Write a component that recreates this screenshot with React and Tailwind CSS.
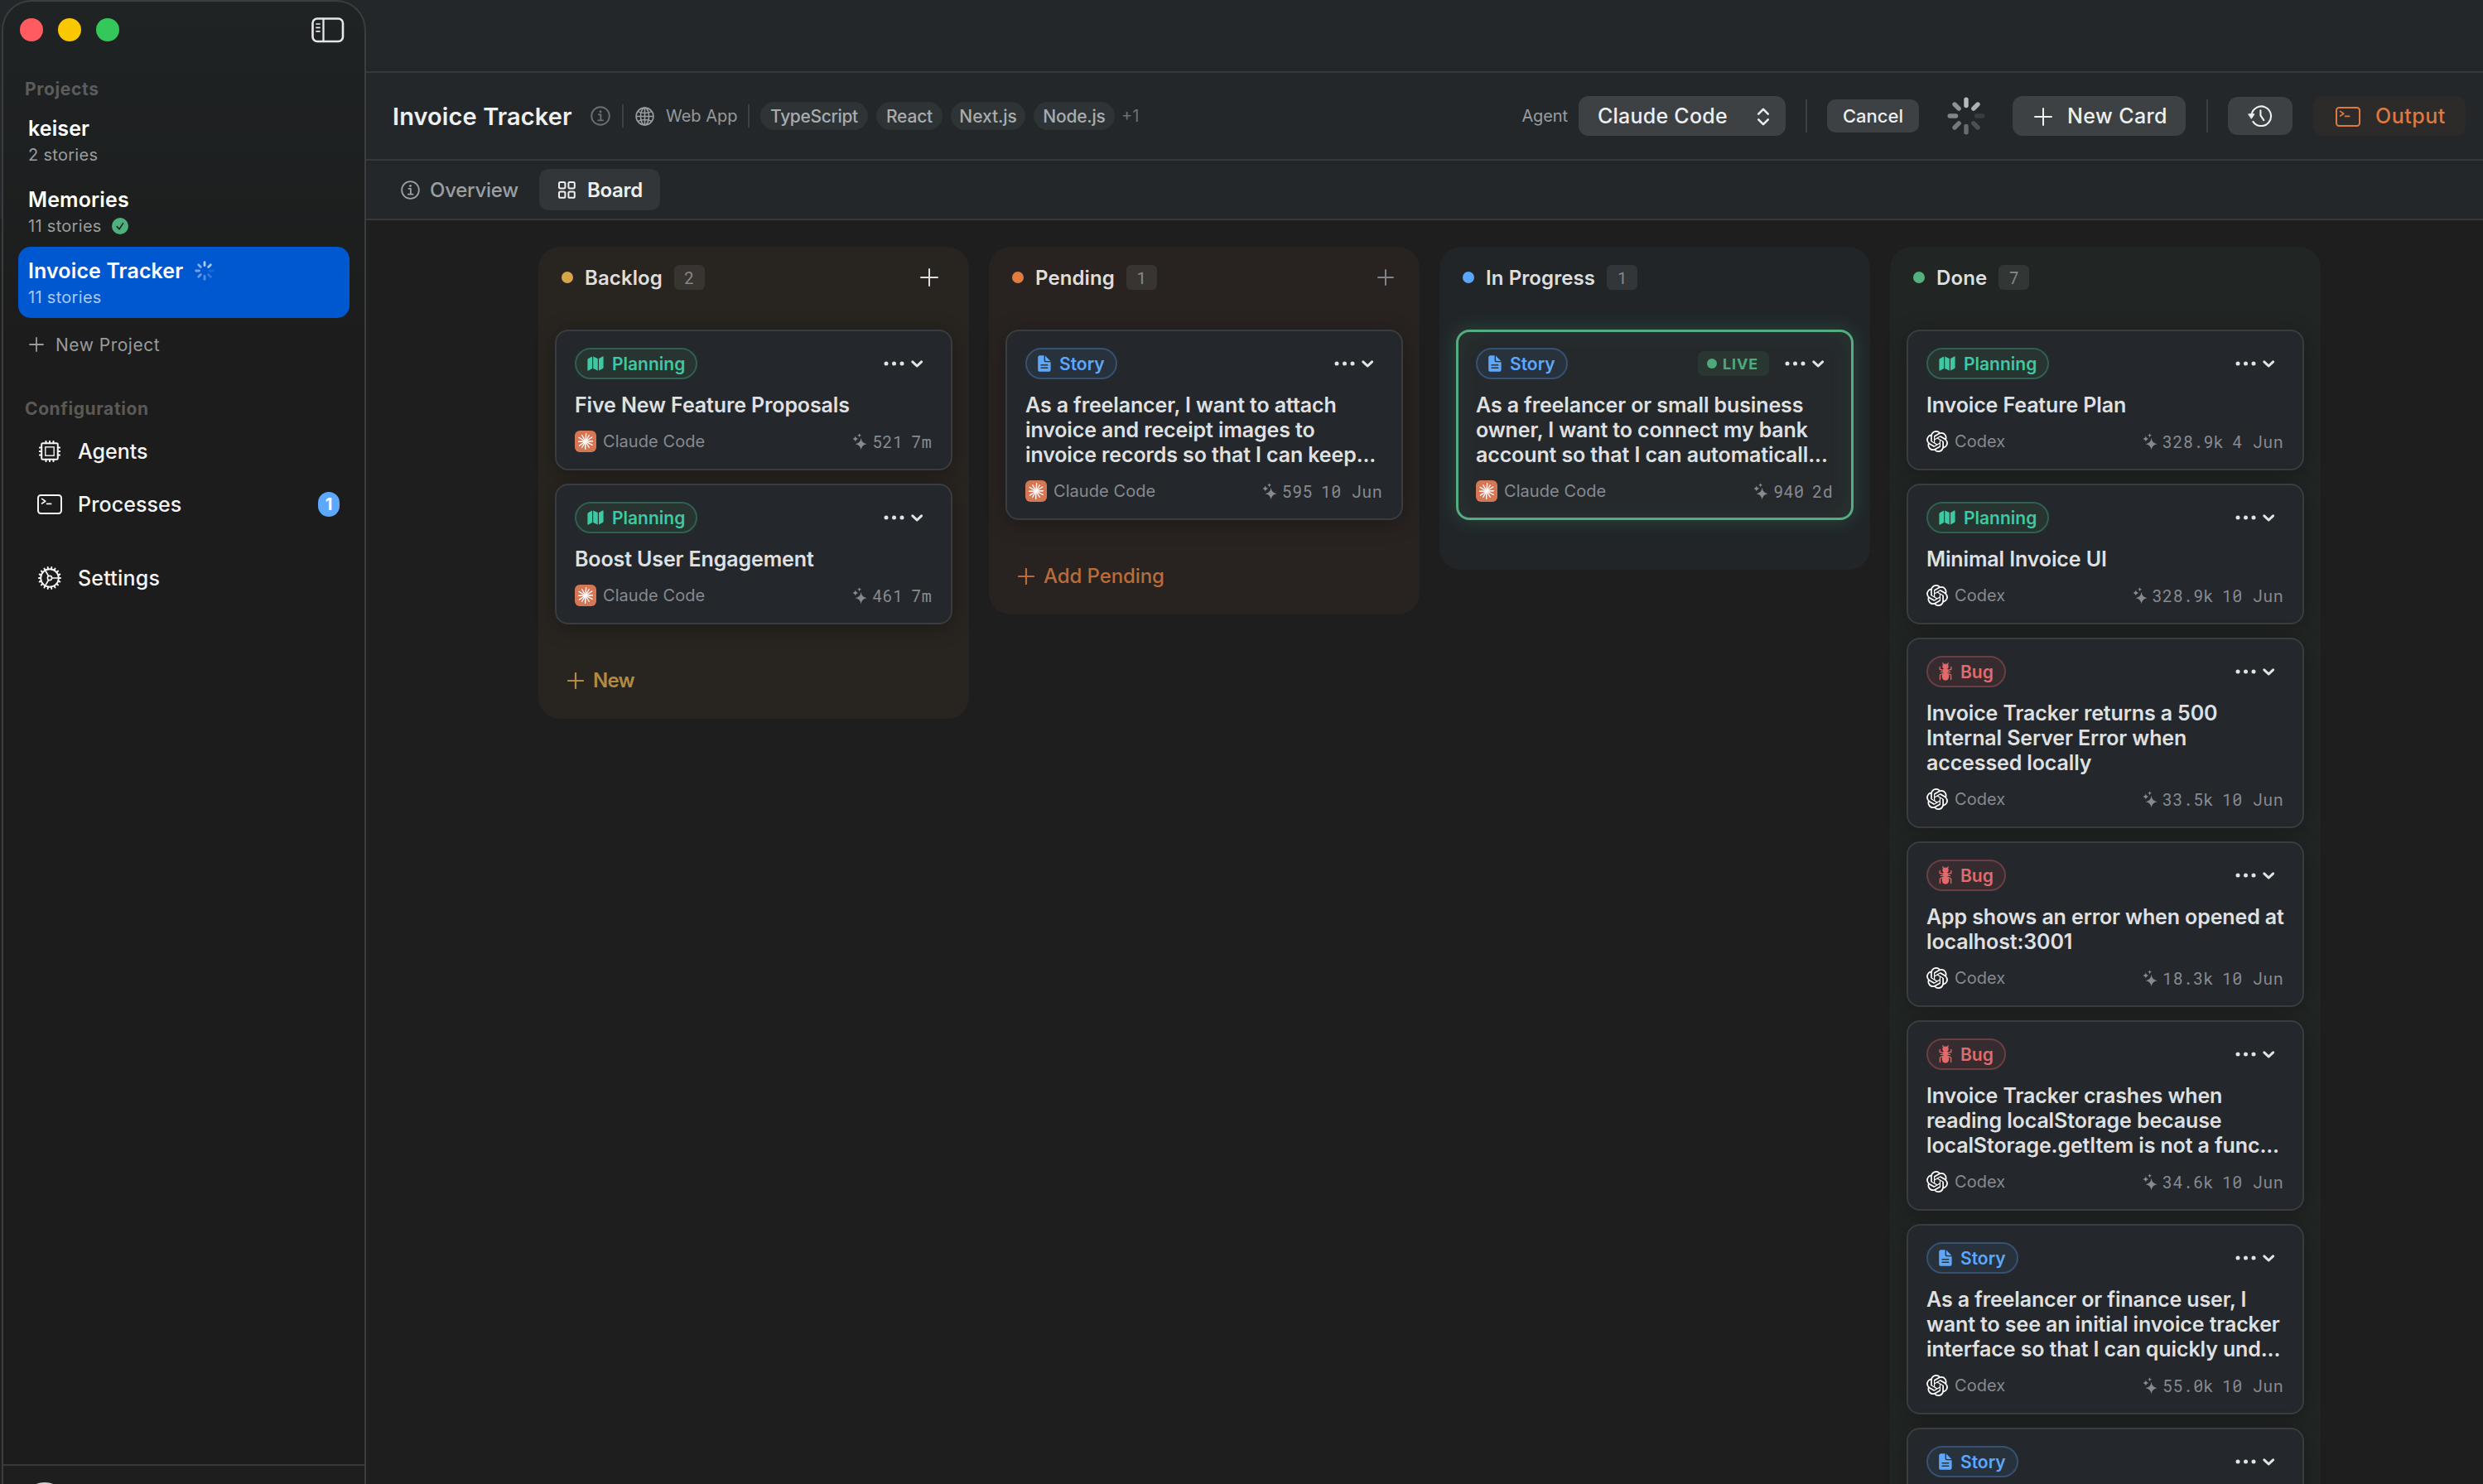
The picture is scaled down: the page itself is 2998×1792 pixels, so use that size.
import React from 'react';
import { SiOpenai } from 'react-icons/si';

const projects = [
    { name: 'keiser', stories: '2 stories' },
    { name: 'Memories', stories: '11 stories', done: true },
    { name: 'Invoice Tracker', stories: '11 stories', active: true }
];

const columns = [
    {
        title: 'Backlog',
        count: 2,
        bg: 'bg-[#282420]',
        dot: 'bg-[#d6a54a]',
        plus: 'mr-[37px] text-[#dedede]',
        plusSize: 22,
        action: 'New',
        actionClass: 'text-[#b08b42] font-semibold tracking-[-0.8px]',
        cards: [
            { type: 'planning', title: ['Five New Feature Proposals'], agent: 'claude', tokens: '521', date: '7m' },
            { type: 'planning', title: ['Boost User Engagement'], agent: 'claude', tokens: '461', date: '7m' }
        ]
    },
    {
        title: 'Pending',
        count: 1,
        bg: 'bg-[#282320]',
        dot: 'bg-[#e27d41]',
        plus: 'mr-[30px] text-[#7f848b]',
        plusSize: 20,
        action: 'Add Pending',
        actionClass: 'text-[#bb6b39] font-medium tracking-[-0.1px]',
        cards: [
            {
                type: 'story',
                title: ['As a freelancer, I want to attach', 'invoice and receipt images to', 'invoice records so that I can keep...'],
                agent: 'claude',
                tokens: '595',
                date: '10 Jun'
            }
        ]
    },
    {
        title: 'In Progress',
        count: 1,
        bg: 'bg-[#212528]',
        dot: 'bg-[#5ba6fb]',
        cards: [
            {
                type: 'story',
                live: true,
                title: ['As a freelancer or small business', 'owner, I want to connect my bank', 'account so that I can automaticall...'],
                agent: 'claude',
                tokens: '940',
                date: '2d'
            }
        ]
    },
    {
        title: 'Done',
        count: 7,
        bg: 'bg-[#212523]',
        dot: 'bg-[#54b07f]',
        cards: [
            { type: 'planning', title: ['Invoice Feature Plan'], agent: 'codex', tokens: '328.9k', date: '4 Jun' },
            { type: 'planning', title: ['Minimal Invoice UI'], agent: 'codex', tokens: '328.9k', date: '10 Jun' },
            {
                type: 'bug',
                title: ['Invoice Tracker returns a 500', 'Internal Server Error when', 'accessed locally'],
                agent: 'codex',
                tokens: '33.5k',
                date: '10 Jun'
            },
            { type: 'bug', title: ['App shows an error when opened at', 'localhost:3001'], agent: 'codex', tokens: '18.3k', date: '10 Jun' },
            {
                type: 'bug',
                title: ['Invoice Tracker crashes when', 'reading localStorage because', 'localStorage.getItem is not a func...'],
                agent: 'codex',
                tokens: '34.6k',
                date: '10 Jun'
            },
            {
                type: 'story',
                title: ['As a freelancer or finance user, I', 'want to see an initial invoice tracker', 'interface so that I can quickly und...'],
                agent: 'codex',
                tokens: '55.0k',
                date: '10 Jun'
            },
            { type: 'story' }
        ]
    }
];

const PlusIcon = ({ size = 20, stroke = 2 }) => (
    <svg width={size} height={size} viewBox={`0 0 ${size} ${size}`} fill="none" stroke="currentColor" strokeWidth={stroke} strokeLinecap="round">
        <path d={`M${size / 2} 1V${size - 1}M1 ${size / 2}H${size - 1}`} />
    </svg>
);

const InfoIcon = ({ size }) => (
    <svg width={size} height={size} viewBox="0 0 24 24" fill="none" stroke="currentColor" strokeWidth="1.9">
        <circle cx="12" cy="12" r="10.8" />
        <path d="M9.8 10.3h2.6v7M9.2 17.4h6" strokeLinecap="round" strokeLinejoin="round" />
        <circle cx="12" cy="6.8" r="1.5" fill="currentColor" stroke="none" />
    </svg>
);

const GlobeIcon = () => (
    <svg width="23" height="23" viewBox="0 0 23 23" fill="none" stroke="currentColor" strokeWidth="1.6">
        <circle cx="11.5" cy="11.5" r="10.4" />
        <ellipse cx="11.5" cy="11.5" rx="5" ry="10.4" />
        <path d="M11.5 1v21M1 11.5h21M3.2 5.6c4.8 2.6 11.8 2.6 16.6 0M3.2 17.4c4.8-2.6 11.8-2.6 16.6 0" />
    </svg>
);

const GridIcon = () => (
    <svg width="21" height="21" viewBox="0 0 21 21" fill="none" stroke="currentColor" strokeWidth="2">
        <rect x="1" y="1" width="7.4" height="7.4" rx="1.6" />
        <rect x="12.4" y="1" width="7.4" height="7.4" rx="1.6" />
        <rect x="1" y="12.4" width="7.4" height="7.4" rx="1.6" />
        <rect x="12.4" y="12.4" width="7.4" height="7.4" rx="1.6" />
    </svg>
);

const SidebarIcon = () => (
    <svg width="40" height="31" viewBox="0 0 40 31" fill="none" stroke="currentColor" strokeLinecap="round">
        <rect x="1.5" y="1.5" width="36.5" height="27.5" rx="5.5" strokeWidth="2.6" />
        <path d="M14.5 2v27" strokeWidth="2.3" />
        <path d="M6 8h4M6 12.4h4M6 16.8h4" strokeWidth="1.7" />
    </svg>
);

const TerminalIcon = () => (
    <svg width="30" height="24" viewBox="0 0 30 24" fill="none" stroke="currentColor" strokeWidth="2" strokeLinecap="round" strokeLinejoin="round">
        <rect x="1" y="1" width="28" height="22" rx="3.2" />
        <path d="M5.6 5.4l4.2 2.8-4.2 2.8M11.6 11.4h5" strokeWidth="1.7" />
    </svg>
);

const ChipIcon = () => (
    <svg width="26" height="26" viewBox="0 0 26 26" fill="none" stroke="currentColor" strokeWidth="2">
        <rect x="3.2" y="3.2" width="19.6" height="19.6" rx="1.4" />
        <rect x="7.8" y="7.8" width="10.4" height="10.4" strokeWidth="1.4" />
        <path
            d="M8.5 0.8v2.4M13 0.8v2.4M17.5 0.8v2.4M8.5 22.8v2.4M13 22.8v2.4M17.5 22.8v2.4M0.8 8.5h2.4M0.8 13h2.4M0.8 17.5h2.4M22.8 8.5h2.4M22.8 13h2.4M22.8 17.5h2.4"
            strokeLinecap="round"
        />
    </svg>
);

const GearIcon = () => (
    <svg width="28" height="28" viewBox="-14 -14 28 28" fill="none" stroke="currentColor">
        <circle r="10.8" strokeWidth="1.9" />
        <circle r="2.6" strokeWidth="1.6" />
        <path d="M2.6 0H10.5M-1.3 -2.3L-5.4 -9.2M-1.3 2.3L-5.4 9.2" strokeWidth="1.7" />
        {Array.from({ length: 18 }, (_, i) => (
            <path key={i} d="M0 -11V-13.2" strokeWidth="1.9" strokeLinecap="round" transform={`rotate(${i * 20 + 10})`} />
        ))}
    </svg>
);

const HistoryIcon = () => (
    <svg width="30" height="26" viewBox="0 0 30 26" fill="none" stroke="currentColor" strokeWidth="2.1" strokeLinecap="round" strokeLinejoin="round">
        <path d="M4.6 11.4A11.8 11.8 0 1 1 6.4 19.8" />
        <path d="M1 10.8h7l-3.5 5.2z" fill="currentColor" strokeWidth="1" />
        <path d="M15.4 6.4v6l3.9 5.8" />
    </svg>
);

const Spinner = ({ size }) => {
    const levels = [0.85, 0.8, 0.12, 0.24, 0.4, 0.48, 0.55, 0.62];
    return (
        <svg width={size} height={size} viewBox="-23 -23 46 46" stroke="currentColor" strokeWidth="5.4" strokeLinecap="round">
            {levels.map((level, i) => (
                <path key={i} d="M0 -12.5V-19.8" opacity={level} transform={`rotate(${i * 45})`} />
            ))}
        </svg>
    );
};

const MapIcon = () => (
    <svg width="20" height="18" viewBox="0 0 20 18" fill="currentColor">
        <path d="M0.4 4.4Q0.4 3.4 1.3 2.9L6 0.4V15L1.5 17.5Q0.4 18 0.4 16.7zM7.2 0.4L12.8 3V17.6L7.2 15zM14 3L18.5 0.5Q19.6 0 19.6 1.3V13.6Q19.6 14.6 18.7 15.1L14 17.6z" />
    </svg>
);

const DocIcon = () => (
    <svg width="16" height="20" viewBox="0 0 16 20">
        <path d="M2.6 0.2H7.6V6.4Q7.6 8.2 9.4 8.2H15.6V17.2Q15.6 19.8 13 19.8H2.6Q0.2 19.8 0.2 17.2V2.8Q0.2 0.2 2.6 0.2zM9 0.6L15.3 6.9H9.8Q9 6.9 9 6.1z" fill="currentColor" />
        <path d="M4 11.7H11.8M4 15.2H11.8" stroke="#28343f" strokeWidth="1.4" strokeLinecap="round" />
    </svg>
);

const AntIcon = () => (
    <svg width="16" height="22" viewBox="0 0 16 22" fill="currentColor">
        <path
            d="M5.6 2.6L4.8 0.8M10.4 2.6L11.2 0.8M5.5 9.4L1.2 8.4V5.4M10.5 9.4L14.8 8.4V5.4M5.4 11.4H2.4M10.6 11.4H13.6M5.4 13.2L1.4 15V20.6M10.6 13.2L14.6 15V20.6"
            fill="none"
            stroke="currentColor"
            strokeWidth="1.3"
            strokeLinecap="round"
            strokeLinejoin="round"
        />
        <ellipse cx="8" cy="4.8" rx="3.7" ry="3.2" />
        <ellipse cx="8" cy="9.9" rx="3.3" ry="2.9" />
        <ellipse cx="8" cy="16.8" rx="4.3" ry="5" />
    </svg>
);

const SparklesIcon = () => (
    <svg width="18" height="21" viewBox="0 0 18 21" fill="currentColor">
        <path d="M10.6 5.8Q11.3 12.2 17.6 13.2Q11.3 14.2 10.6 20.6Q9.9 14.2 3.6 13.2Q9.9 12.2 10.6 5.8z" />
        <path d="M3.8 3.2Q4.3 6.4 7.4 6.9Q4.3 7.4 3.8 10.6Q3.3 7.4 0.2 6.9Q3.3 6.4 3.8 3.2z" />
        <path d="M8.6 0.2Q8.9 2.3 11 2.7Q8.9 3.1 8.6 5.2Q8.3 3.1 6.2 2.7Q8.3 2.3 8.6 0.2z" />
    </svg>
);

const ClaudeIcon = () => (
    <div className="flex size-[26px] items-center justify-center rounded-[6px] bg-[#d57655] text-white">
        <svg width="20" height="20" viewBox="-10 -10 20 20" stroke="currentColor" strokeWidth="1.4" strokeLinecap="round">
            {[4, 30, 57, 88, 118, 150, 182, 210, 236, 268, 300, 330].map((deg, i) => (
                <path key={deg} d={i % 2 ? 'M0 0V-8.4' : 'M0 0V-9.2'} transform={`rotate(${deg})`} />
            ))}
        </svg>
    </div>
);

const MenuIcon = () => (
    <svg width="48" height="12" viewBox="0 0 48 12" fill="currentColor">
        <circle cx="3" cy="6" r="2.5" />
        <circle cx="12.5" cy="6" r="2.5" />
        <circle cx="22" cy="6" r="2.5" />
        <path d="M34.8 3.8L40.2 9L45.6 3.8" fill="none" stroke="currentColor" strokeWidth="3" strokeLinecap="round" strokeLinejoin="round" />
    </svg>
);

const cardTypes = {
    planning: { label: 'Planning', icon: MapIcon, style: 'text-[#3fc8a4] bg-[#27342f] border-[#2f6153]' },
    story: { label: 'Story', icon: DocIcon, style: 'text-[#5ea8fb] bg-[#28323c] border-[#365172]' },
    bug: { label: 'Bug', icon: AntIcon, style: 'text-[#e26a6b] bg-[#362c2f] border-[#693f43]' }
};

const Card = ({ card }) => {
    const type = cardTypes[card.type];
    const TypeIcon = type.icon;
    const frame = card.live
        ? 'border-[3px] p-[21px] pt-[19px] pb-[19px] border-[#56ab80] bg-[#25292c] shadow-[0_0_24px_rgba(70,170,120,0.26),inset_0_0_28px_rgba(80,170,110,0.10)]'
        : 'border-2 p-[22px] pt-[20px] pb-[20px] border-[#393d40] bg-[#24272b] shadow-[0_4px_26px_rgba(0,0,0,0.26)]';

    return (
        <div className={`rounded-[16px] ${frame} ${card.title ? '' : 'h-[230px]'}`}>
            <div className="flex h-[38px] items-center">
                <div className={`flex h-[38px] items-center gap-[10px] rounded-full border-2 px-[13px] ${type.style}`}>
                    <TypeIcon />
                    <span className="text-[21px] leading-none font-semibold">{type.label}</span>
                </div>
                <div className="ml-auto flex items-center gap-[19px] pr-[11px] text-[#e2e3e4]">
                    {card.live && (
                        <div className="flex h-[30px] w-[86px] items-center gap-[7px] rounded-[7px] bg-[#2a3632] pl-[11px] text-[#4ea97b]">
                            <span className="size-[12px] rounded-full bg-[#4ea97b]"></span>
                            <span className="pt-px text-[18px] leading-none font-bold tracking-[0.9px]">LIVE</span>
                        </div>
                    )}
                    <MenuIcon />
                </div>
            </div>
            {card.title && (
                <>
                    <h3 className="mt-4 text-[25px] leading-[30px] font-semibold tracking-[-0.12px] whitespace-nowrap text-[#dfe0e1]">
                        {card.title.map((line) => (
                            <span key={line} className="block">{line}</span>
                        ))}
                    </h3>
                    <div className="mt-4 flex h-[26px] items-center text-[#878a90]">
                        {card.agent === 'claude' ? <ClaudeIcon /> : <SiOpenai size={26} className="text-white" />}
                        <span className="ml-[8px] text-[20px] leading-none tracking-[0.06px]">{card.agent === 'claude' ? 'Claude Code' : 'Codex'}</span>
                        <div className="ml-auto flex items-center pr-[1px] font-['Roboto_Mono','DejaVu_Sans_Mono',monospace] text-[20px] leading-none tracking-[0.35px]">
                            <SparklesIcon />
                            <span className="ml-[6px]">{card.tokens}</span>
                            <span className="ml-[10px] whitespace-pre">{card.date}</span>
                        </div>
                    </div>
                </>
            )}
        </div>
    );
};

const Column = ({ column }) => (
    <div className={`w-[520px] shrink-0 rounded-[26px] ${column.bg}`}>
        <div className="flex h-[74px] items-center pl-[28px]">
            <span className={`size-[14px] rounded-full ${column.dot}`}></span>
            <h2 className="ml-[14px] pt-[2px] text-[24px] leading-none font-semibold tracking-[0.1px] text-[#dededd]">{column.title}</h2>
            <span className="ml-[14px] flex h-[30px] w-[37px] items-center justify-center rounded-[6px] bg-white/[0.08] font-['Roboto_Mono','DejaVu_Sans_Mono',monospace] text-[20px] leading-none text-[#85888c]">
                {column.count}
            </span>
            {column.plus && (
                <button className={`ml-auto flex w-[22px] justify-center ${column.plus}`}>
                    <PlusIcon size={column.plusSize} />
                </button>
            )}
        </div>
        <div className="flex flex-col gap-4 px-5 pt-[26px]">
            {column.cards.map((card, i) => (
                <Card key={i} card={card} />
            ))}
        </div>
        {column.action ? (
            <button className={`mt-5 flex h-[94px] items-center gap-[11px] pt-px pl-[35px] text-[24px] leading-none ${column.actionClass}`}>
                <PlusIcon size={20} stroke={2.2} />
                {column.action}
            </button>
        ) : (
            <div className="h-[60px]"></div>
        )}
    </div>
);

const Sidebar = () => (
    <aside className="w-[442px] shrink-0 bg-[linear-gradient(#23272a_0_264px,#1e1e1e_264px)] pl-[2px]">
        <div className="flex h-full flex-col rounded-t-[36px] border-2 border-b-0 border-[#3b3e40] bg-[linear-gradient(#1f2324,#1c1c1c_420px)]">
            <div className="flex h-[70px] items-center gap-[18px] pr-[24px] pb-[2px] pl-[20px]">
                <span className="size-[28px] rounded-full bg-[#ff5b60]"></span>
                <span className="size-[28px] rounded-full bg-[#fac800]"></span>
                <span className="size-[28px] rounded-full bg-[#34c759]"></span>
                <span className="ml-auto text-[#e6e7e7]"><SidebarIcon /></span>
            </div>

            <p className="mt-[24px] pl-[26px] text-[21px] leading-[24px] font-bold tracking-[0.65px] text-[#5a5c5d]">Projects</p>
            <div className="mx-[18px] mt-[6px] flex flex-col">
                {projects.map((project) => (
                    <div key={project.name} className={`h-[86px] rounded-[15px] pt-[13px] pl-[12px] ${project.active ? 'bg-[#0058d0]' : ''}`}>
                        <div className="flex h-8 items-center text-[25px] leading-none font-semibold tracking-[0.12px] text-white">
                            {project.name}
                            {project.active && <span className="ml-[14px] text-[#cfe2ff]"><Spinner size={24} /></span>}
                        </div>
                        <div className={`flex h-8 items-center text-[20px] leading-none tracking-[0.3px] ${project.active ? 'text-[#a9c9f3]' : 'text-[#9b9c9c]'}`}>
                            {project.stories}
                            {project.done && (
                                <svg className="ml-[12px]" width="20" height="20" viewBox="0 0 20 20">
                                    <circle cx="10" cy="10" r="10" fill="#4fb07f" />
                                    <path d="M6.2 10.6l2.8 3.2 4.6-7.2" fill="none" stroke="#1d2321" strokeWidth="1.6" strokeLinecap="round" strokeLinejoin="round" />
                                </svg>
                            )}
                        </div>
                    </div>
                ))}
                <div className="mt-4 flex h-8 items-center gap-[14px] pl-[13px] text-[21px] leading-none tracking-[0.5px] text-[#9b9b9b]">
                    <PlusIcon size={18} stroke={1.8} />
                    New Project
                </div>
            </div>

            <p className="mt-[50px] pl-[26px] text-[21px] leading-[24px] font-bold tracking-[0.6px] text-[#595959]">Configuration</p>
            <nav className="mt-[7px] flex flex-col pr-[30px] pl-[41px] text-[25px] leading-none font-medium text-[#f4f4f4]">
                <div className="flex h-16 items-center">
                    <span className="flex w-[30px] justify-center"><ChipIcon /></span>
                    <span className="ml-[19px]">Agents</span>
                </div>
                <div className="flex h-16 items-center">
                    <span className="flex w-[30px] justify-center"><TerminalIcon /></span>
                    <span className="ml-[19px] tracking-[0.1px]">Processes</span>
                    <span className="ml-auto flex h-[30px] w-[26px] items-center justify-center rounded-full bg-[#5ca8fc] text-[20px] font-bold text-white">1</span>
                </div>
                <div className="mt-[25px] flex h-16 items-center">
                    <span className="flex w-[30px] justify-center"><GearIcon /></span>
                    <span className="ml-[19px] pt-px tracking-[0.2px]">Settings</span>
                </div>
            </nav>

            {/* Account footer, cut off by the window edge */}
            <div className="mt-auto h-[24px] overflow-hidden border-t-2 border-[#383838] bg-[#1e1e1e] pt-[20px] pl-[22px]">
                <div className="size-[56px] rounded-full bg-[#d2d2d2]"></div>
            </div>
        </div>
    </aside>
);

const Divider = ({ className }) => <span className={`w-[2px] bg-[#3b3f42] ${className}`}></span>;

const Toolbar = () => (
    <div className="flex h-[106px] items-center border-b-2 border-[#36393c] pr-[21px] pl-[32px] leading-none">
        <h1 className="w-[216px] text-[29px] font-semibold tracking-[0.1px] whitespace-nowrap text-[#eeefef]">Invoice Tracker</h1>
        <span className="ml-[23px] text-[#6a6e71]"><InfoIcon size={24} /></span>
        <Divider className="ml-[14px] h-[28px]" />
        <span className="ml-[14px] text-[#9a9d9f]"><GlobeIcon /></span>
        <span className="ml-[14px] w-[87px] text-[20px] text-[#96999b]">Web App</span>
        <Divider className="ml-[12px] h-[28px]" />
        <div className="ml-[13px] flex gap-[10px] text-[21px] font-medium text-[#a9acae]">
            <span className="flex h-[34px] w-[130px] items-center justify-center rounded-full bg-[#2e3336] tracking-[-0.35px]">TypeScript</span>
            <span className="flex h-[34px] w-[80px] items-center justify-center rounded-full bg-[#2e3336] tracking-[-0.2px]">React</span>
            <span className="flex h-[34px] w-[90px] items-center justify-center rounded-full bg-[#2e3336] tracking-[-0.1px]">Next.js</span>
            <span className="flex h-[34px] w-[98px] items-center justify-center rounded-full bg-[#2e3336] tracking-[-0.2px]">Node.js</span>
        </div>
        <span className="ml-[8px] text-[20px] text-[#6c7073]">+1</span>

        <span className="ml-auto text-[20px] tracking-[-0.1px] text-[#9a9d9f]">Agent</span>
        <button className="ml-[13px] flex h-[48px] w-[250px] items-center justify-between rounded-[12px] bg-[#3d4143] pt-px pr-[19px] pl-[23px] text-[25px] font-medium tracking-[0.24px] text-[#eeefef]">
            Claude Code
            <svg width="16" height="22" viewBox="0 0 16 22" fill="none" stroke="currentColor" strokeWidth="2.5" strokeLinecap="round" strokeLinejoin="round">
                <path d="M2.2 7.6L8 1.8l5.8 5.8M2.2 14.4L8 20.2l5.8-5.8" />
            </svg>
        </button>
        <Divider className="ml-[24px] h-[40px]" />
        <button className="ml-[24px] h-[40px] w-[111px] rounded-[10px] bg-[#3d4143] text-[22px] font-medium text-[#eeefef]">Cancel</button>
        <span className="ml-[34px] text-[#d3d4d5]"><Spinner size={46} /></span>
        <button className="ml-[33px] flex h-[48px] w-[209px] items-center gap-[18px] rounded-[12px] bg-[#3d4143] pt-px pl-[26px] text-[25px] font-medium tracking-[0.4px] whitespace-nowrap text-[#eeefef]">
            <PlusIcon size={22} />
            New Card
        </button>
        <Divider className="ml-[25px] h-[40px]" />
        <button className="ml-[24px] flex h-[46px] w-[78px] items-center justify-center rounded-[12px] bg-[#3d4143] text-[#eeefef]">
            <HistoryIcon />
        </button>
        <button className="ml-[25px] flex h-[48px] w-[184px] items-center gap-[18px] rounded-[12px] bg-[#2c2b2a] pt-px pl-[27px] text-[25px] font-medium tracking-[0.5px] text-[#db7a42]">
            <TerminalIcon />
            Output
        </button>
    </div>
);

const App = () => {
    return (
        <div className="flex h-[1792px] w-[2998px] overflow-hidden bg-[#1e1e1e] font-[Inter,'Liberation_Sans',sans-serif]">
            <Sidebar />
            <main className="flex min-w-0 flex-1 flex-col">
                <header className="bg-[#23272a]">
                    <div className="h-[88px] border-b-2 border-[#36393c]"></div>
                    <Toolbar />
                    <div className="flex h-[72px] items-center border-b-2 border-[#36393c] pl-[42px] text-[24px] leading-none">
                        <div className="flex items-center gap-[12px] pt-px font-medium tracking-[-0.25px] text-[#9c9fa1]">
                            <InfoIcon size={23} />
                            Overview
                        </div>
                        <div className="ml-[25px] flex h-[50px] w-[146px] items-center gap-[14px] rounded-[12px] bg-[#323639] pt-px pl-[23px] font-semibold tracking-[-0.3px] text-[#eeefef]">
                            <GridIcon />
                            Board
                        </div>
                    </div>
                </header>

                <div className="flex flex-1 items-start gap-6 overflow-hidden pt-8 pl-[208px]">
                    {columns.map((column) => (
                        <Column key={column.title} column={column} />
                    ))}
                </div>
            </main>
        </div>
    );
};

export default App;
